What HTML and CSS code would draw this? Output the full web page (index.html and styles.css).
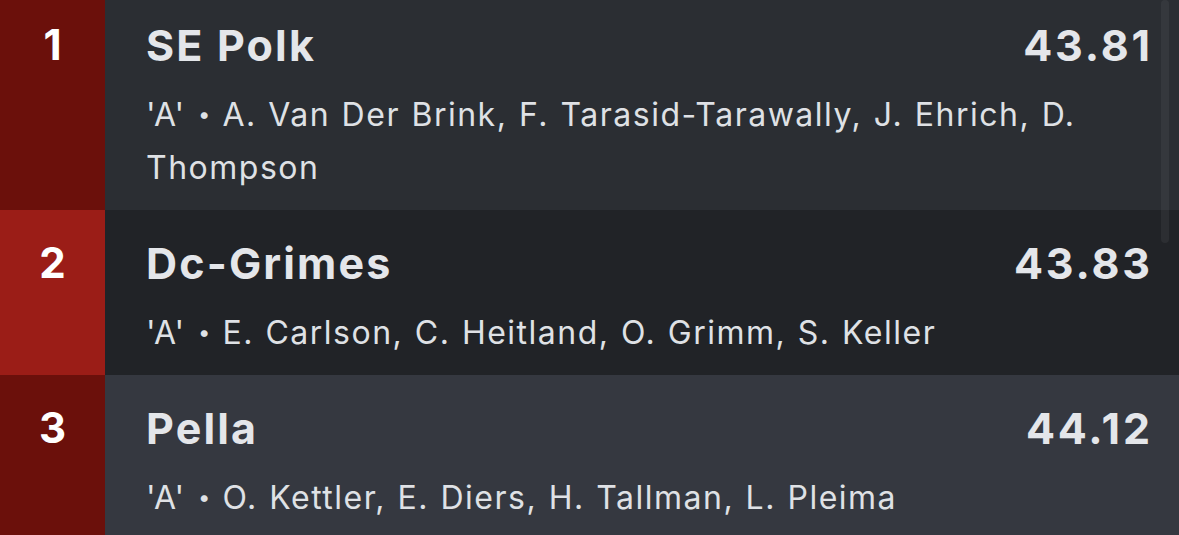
FILE: index.html
```html
<!DOCTYPE html>
<html lang="en">
<head>
<meta charset="utf-8">
<title>Results</title>
<link rel="stylesheet" href="styles.css">
</head>
<body>
<div class="viewport">
  <div class="list">
    <div class="row row-a">
      <div class="rank rank-dark">1</div>
      <div class="body">
        <div class="top">
          <div class="name">SE Polk</div>
          <div class="time">43.81</div>
        </div>
        <div class="sub"><span class="cls">'A'</span><span class="dot">•</span>A. Van Der Brink, F. Tarasid-Tarawally, J. Ehrich, D. Thompson</div>
      </div>
    </div>
    <div class="row row-b">
      <div class="rank rank-bright">2</div>
      <div class="body">
        <div class="top">
          <div class="name">Dc-Grimes</div>
          <div class="time">43.83</div>
        </div>
        <div class="sub"><span class="cls">'A'</span><span class="dot">•</span>E. Carlson, C. Heitland, O. Grimm, S. Keller</div>
      </div>
    </div>
    <div class="row row-c">
      <div class="rank rank-dark">3</div>
      <div class="body">
        <div class="top">
          <div class="name">Pella</div>
          <div class="time">44.12</div>
        </div>
        <div class="sub"><span class="cls">'A'</span><span class="dot">•</span>O. Kettler, E. Diers, H. Tallman, L. Pleima</div>
      </div>
    </div>
  </div>
  <div class="scroll-thumb"></div>
</div>
</body>
</html>
```
FILE: styles.css
```css
html, body {
  margin: 0;
  padding: 0;
  background: #2b2e33;
}
body {
  font-family: "Inter", "Roboto", "Liberation Sans", sans-serif;
  color: #e5e7eb;
}
.viewport {
  position: relative;
  width: 1179px;
  height: 535px;
  overflow: hidden;
}
.list {
  margin-top: -8px;
  display: flex;
  flex-direction: column;
}
.row {
  display: flex;
}
.row-a { background: #2b2e33; }
.row-b { background: #212327; }
.row-c { background: #353840; }
.rank {
  width: 105px;
  flex: none;
  box-sizing: border-box;
  padding-top: 27px;
  text-align: center;
  color: #ffffff;
  font-weight: 700;
  font-size: 42px;
  line-height: 52px;
}
.rank-dark { background: #6b100b; }
.rank-bright { background: #9b1d17; }
.body {
  flex: 1;
  padding: 27px 29px 16px 41px;
}
.top {
  display: flex;
  justify-content: space-between;
  align-items: baseline;
}
.name, .time {
  font-weight: 700;
  font-size: 43px;
  line-height: 52px;
  color: #e4e6ea;
}
.name {
  letter-spacing: 0.05em;
}
.time {
  letter-spacing: 0.065em;
  margin-right: -0.065em;
}
.sub {
  margin-top: 17px;
  font-size: 32px;
  line-height: 53px;
  letter-spacing: 0.047em;
  word-spacing: 1px;
  color: #dfe1e5;
}
.cls {
  letter-spacing: 0.03em;
}
.dot {
  display: inline-block;
  font-size: 22px;
  line-height: 1;
  margin: 0 12px 0 13px;
  vertical-align: 4px;
  letter-spacing: 0;
}
.scroll-thumb {
  position: absolute;
  top: 0;
  right: 10px;
  width: 8px;
  height: 243px;
  border-radius: 4px;
  background: rgba(255, 255, 255, 0.05);
}
```
